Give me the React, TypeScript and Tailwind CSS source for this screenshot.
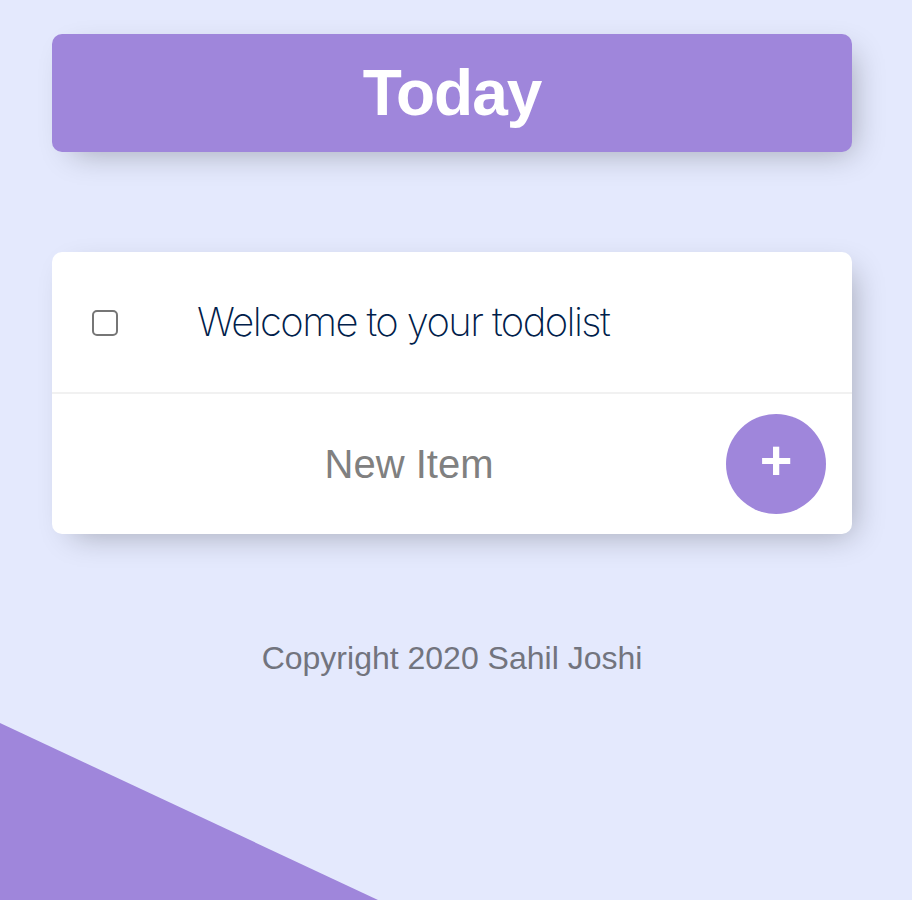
import { useState } from 'react';

const ACCENT = '#9F86DB';

export default function App() {
  const [items, setItems] = useState<string[]>(['Welcome to your todolist']);
  const [draft, setDraft] = useState<string>('');

  const addItem = () => {
    if (!draft.trim()) return;
    setItems((prev) => [...prev, draft.trim()]);
    setDraft('');
  };

  return (
    <div className="relative min-h-[900px] w-full overflow-hidden bg-[#E4E9FD] font-['Liberation_Sans',Arial,sans-serif]">
      {/* diagonal backdrop */}
      <svg
        className="absolute bottom-0 left-0"
        width="912"
        height="900"
        viewBox="0 0 912 900"
        aria-hidden
      >
        <polygon points="0,723 378,900 0,900" fill={ACCENT} />
      </svg>

      <div className="relative w-[904px] pt-[34px]">
        <div className="mx-auto flex h-[118px] w-[800px] items-center justify-center rounded-[10px] bg-[#9F86DB] shadow-[10px_10px_30px_-10px_rgba(0,0,0,0.3)]">
          <h1 className="text-[64px] leading-none font-bold tracking-[-1px] text-white">
            Today
          </h1>
        </div>

        <div className="mx-auto mt-[100px] w-[800px] rounded-[10px] bg-white shadow-[10px_10px_30px_-10px_rgba(0,0,0,0.3)]">
          {items.map((item, i) => (
            <div
              key={i}
              className="flex h-[142px] items-center border-b-2 border-[#F1F1F1]"
            >
              <span className="mt-[2px] ml-[40px] h-[26px] w-[26px] shrink-0 rounded-[5px] border-2 border-[#767676] bg-white" />
              <p className="pl-[79px] font-['Inter',sans-serif] text-[40px] leading-none font-extralight tracking-[-1.6px] text-[#00204a]">
                {item}
              </p>
            </div>
          ))}
          <div className="flex h-[140px] items-center gap-[4px] pl-[44px]">
            <input
              type="text"
              value={draft}
              onChange={(e) => setDraft(e.target.value)}
              placeholder="New Item"
              className="h-[120px] w-[626px] bg-transparent text-center text-[40px] text-[#00204a] outline-none placeholder:text-[#808080]"
            />
            <button
              onClick={addItem}
              className="flex h-[100px] w-[100px] items-center justify-center rounded-full bg-[#9F86DB] pb-[8px] text-[56px] leading-none font-bold text-white"
            >
              +
            </button>
          </div>
        </div>

        <footer className="mt-[100px] text-center text-[32px] text-[#72747E]">
          Copyright 2020 Sahil Joshi
        </footer>
      </div>
    </div>
  );
}
